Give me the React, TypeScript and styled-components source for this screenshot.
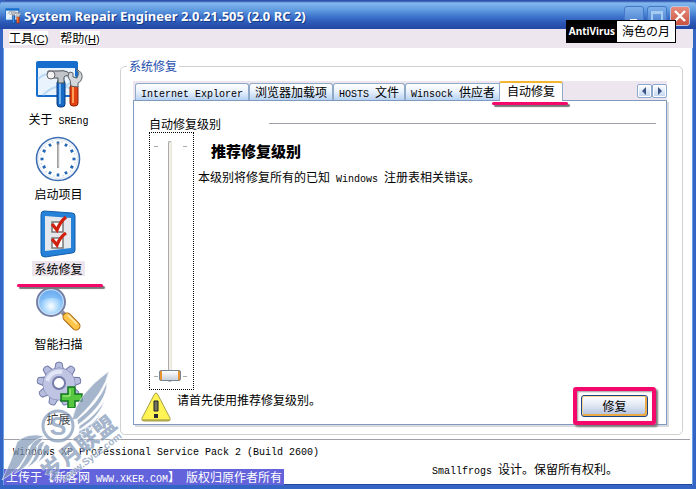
import React from "react";
import styled, { createGlobalStyle, css } from "styled-components";

const GlobalStyle = createGlobalStyle`
  * { box-sizing: border-box; }
  body {
    margin: 0;
    background: #fff;
    color: #000;
    font: 12px/16px "Noto Sans CJK SC", sans-serif;
  }
  button, input { font: inherit; color: inherit; margin: 0; }
`;

const Window = styled.div`
  position: relative;
  display: flex;
  flex-direction: column;
  min-height: 100vh;
  border: solid #3465c4;
  border-width: 0 3px 4px;
  background: #fff;
  box-shadow: inset 1px 0 #6d9ee8, inset -1px 0 #6d9ee8, inset 0 -1px #2348a0;
`;

const TitleBar = styled.header`
  display: flex;
  align-items: center;
  gap: 3px;
  height: 29px;
  margin: 0 -3px;
  padding: 3px 6px 0 5px;
  border-radius: 5px 5px 0 0;
  background: linear-gradient(#2d51ac 0, #2d51ac 1px, #84b8ee 3px, #5f9be0 10px, #3c72cb 17px, #2a56b4 23px, #2347a5 29px);
`;

const Title = styled.h1`
  flex: 1;
  margin: 0;
  color: #fff;
  font: 700 13px/20px "Noto Sans", sans-serif;
  text-shadow: 1px 1px #173a86;
  white-space: nowrap;
`;

const Controls = styled.div`
  display: flex;
  gap: 3px;
`;

const ControlButton = styled.button<{ $close?: boolean }>`
  display: grid;
  place-items: center;
  width: 20px;
  height: 20px;
  padding: 0;
  border: 1px solid ${(p) => (p.$close ? "#b9c7e8" : "#4477c8")};
  border-radius: 3px;
  background: ${(p) => (p.$close ? "linear-gradient(#e98d7c, #c9523f)" : "linear-gradient(#7fb2ea, #4478cc)")};
`;

const MenuBar = styled.nav`
  display: flex;
  gap: 12px;
  height: 19px;
  padding: 2px 6px;
  background: #ede6ee;
`;

const MenuItem = styled.button`
  height: 14px;
  padding: 0;
  border: 0;
  background: #fff;
  line-height: 13px;
`;

const Latin = styled.span`
  font-family: "Liberation Sans", sans-serif;
  font-size: 11px;
`;

const Mono = styled.span`
  font-family: "Liberation Mono", monospace;
  font-size: 10px;
  white-space: pre;
`;

const Main = styled.main`
  flex: 1;
  display: grid;
  grid-template-columns: 111px 1fr;
  gap: 6px;
  padding: 10px 10px 4px 0;
`;

const Sidebar = styled.nav`
  display: flex;
  flex-direction: column;
  align-items: center;
`;

const SideItem = styled.button`
  display: flex;
  flex-direction: column;
  align-items: center;
  gap: 3px;
  height: 75px;
  padding: 2px 0 0;
  border: 0;
  background: none;
`;

const SideLabel = styled.span<{ $active?: boolean }>`
  position: relative;
  height: 15px;
  padding: 0 2px;
  line-height: 15px;
  background: ${(p) => (p.$active ? "#ede6ee" : "none")};
`;

const markLine = css`
  content: "";
  position: absolute;
  height: 3px;
  border-radius: 2px;
  background: #f4086c;
  box-shadow: 2px 2px 1px #777;
`;

const SideMark = styled.i`
  &::after {
    ${markLine}
    left: -15px;
    right: -18px;
    top: 23px;
  }
`;

const Group = styled.fieldset`
  display: flex;
  flex-direction: column;
  min-width: 0;
  margin: 0;
  padding: 7px 15px 9px 12px;
  border: 1px solid #d0d0d0;
  border-radius: 5px;
`;

const Legend = styled.legend`
  margin-left: -6px;
  padding: 0 2px;
  color: #1f4fae;
`;

const TabStrip = styled.div`
  display: flex;
  align-items: flex-end;
  height: 19px;
  padding-left: 2px;
  background: #ede6ee;
`;

const Tab = styled.button<{ $active?: boolean }>`
  position: relative;
  height: 17px;
  padding: 0 5px;
  border: 1px solid #8fa9c8;
  border-bottom: 0;
  border-radius: 3px 3px 0 0;
  background: linear-gradient(#fff, #eaf2fd 45%, #b7d2f2);
  line-height: 16px;
  white-space: nowrap;
  ${(p) =>
    p.$active &&
    css`
      z-index: 1;
      height: 20px;
      margin: 0 0 -1px -2px;
      padding: 0 7px 2px;
      border-top: 2px solid #f5b52e;
      background: #fff;
      &::after {
        ${markLine}
        left: -8px;
        right: -6px;
        bottom: -4px;
      }
    `}
`;

const Scrollers = styled.div`
  display: flex;
  align-self: center;
  margin-left: auto;
`;

const ScrollButton = styled.button`
  display: grid;
  place-items: center;
  width: 15px;
  height: 14px;
  padding: 0;
  border: 1px solid #8ba6cf;
  border-radius: 2px;
  background: linear-gradient(#fff, #bfd3ef);
  box-shadow: inset 0 0 0 1px #fff;
`;

const Panel = styled.section`
  flex: 1;
  display: flex;
  flex-direction: column;
  padding: 14px 10px 0 15px;
  border: 1px solid #7f9ac0;
  box-shadow: 2px 2px #d9d9de;
`;

const PanelHeading = styled.div`
  display: grid;
  grid-template-columns: 120px 1fr;
  align-items: center;
  height: 17px;
  &::after {
    content: "";
    height: 1px;
    background: #a0a0a8;
  }
`;

const PanelBody = styled.div`
  flex: 1;
  display: grid;
  grid-template-columns: 45px 1fr;
  gap: 4px;
`;

const SliderBox = styled.label`
  position: relative;
  display: flex;
  justify-content: center;
  padding: 8px 4px 7px 0;
  border: 1px dotted #000;
`;

const tick = css`
  content: "";
  position: absolute;
  left: 4px;
  right: 6px;
  height: 1px;
  background: linear-gradient(90deg, #aaa 4px, transparent 4px calc(100% - 4px), #aaa calc(100% - 4px));
`;

const Ticks = styled.i`
  &::before { ${tick} top: 13px; }
  &::after { ${tick} bottom: 12px; }
`;

const Range = styled.input`
  appearance: none;
  position: relative;
  width: 22px;
  background: none;
  writing-mode: vertical-lr;
  direction: rtl;
  &::-webkit-slider-runnable-track {
    width: 4px;
    border: 1px solid #aaa;
    border-right-color: #e8e6dc;
    border-radius: 2px;
    background: #f2f0e6;
  }
  &::-webkit-slider-thumb {
    appearance: none;
    width: 22px;
    height: 11px;
    margin-left: -10px;
    border: 1px solid #778494;
    border-radius: 2px;
    background:
      linear-gradient(90deg, #e8922e 2px, transparent 2px calc(100% - 2px), #e8922e calc(100% - 2px)),
      linear-gradient(#fff, #c9d0dc);
  }
`;

const Advice = styled.div`
  padding: 10px 0 0;
`;

const Level = styled.h2`
  margin: 0 0 9px 13px;
  font-size: 15px;
  font-weight: 900;
  line-height: 18px;
`;

const Text = styled.p`
  margin: 0;
`;

const ActionRow = styled.div`
  display: flex;
  align-items: flex-start;
  gap: 6px;
  height: 34px;
  margin-left: -8px;
  padding: 2px 8px 0 0;
`;

const Hint = styled.p`
  flex: 1;
  margin: 0;
`;

const RepairButton = styled.button`
  position: relative;
  width: 67px;
  height: 22px;
  margin-top: 3px;
  padding: 0;
  border: 1px solid #1c4683;
  border-radius: 3px;
  background: linear-gradient(#fff, #dfe5f2 50%, #aebfdd);
  box-shadow: inset 1px 1px #fbd592, inset -2px -2px #ecaa45;
  line-height: 18px;
`;

const Highlight = styled.i`
  position: absolute;
  inset: -9px;
  border: 4px solid #f4086c;
  border-radius: 3px;
  box-shadow: 2px 2px 2px #777, inset 1px 1px 2px #999;
`;

const Footer = styled.footer`
  display: grid;
  grid-template-columns: auto 1fr;
  grid-template-rows: 24px 16px;
  row-gap: 5px;
  height: 46px;
  margin-right: 3px;
  border-top: 1px solid #a0a0a8;
`;

const System = styled.p`
  grid-column: 1 / -1;
  margin: 0;
  padding: 2px 10px;
`;

const Source = styled.p`
  margin: 0 0 0 1px;
  padding: 0 2px;
  background: #6363dc;
  color: #fff;
  white-space: nowrap;
`;

const Credit = styled.p`
  margin: -8px 72px 0 auto;
`;

const Badge = styled.div`
  position: absolute;
  top: 20px;
  right: 17px;
  display: flex;
  height: 23px;
  border: 1px solid #000;
  background: #fff;
  line-height: 20px;
  b {
    width: 50px;
    background: #000;
    color: #fff;
    font: 700 10px/21px "Noto Sans", sans-serif;
    text-align: center;
  }
  span { padding: 0 5px; }
`;

const Watermark = styled.svg`
  position: absolute;
  left: -3px;
  bottom: -4px;
  pointer-events: none;
`;

const ToolsIcon = ({ size = 48 }: { size?: number }) => (
  <svg width={size} height={size} viewBox="0 0 48 48">
    <rect x="1" y="1" width="42" height="36" rx="2" fill="#176dcc" />
    <path d="M3 8h37v27H3z" fill="#e9f3fd" />
    <path d="M3 19Q16 8 24 20T40 16M8 35Q23 20 40 31" fill="none" stroke="#b9d9f6" strokeWidth="2" />
    <rect x="22" y="20" width="8" height="27" rx="3" fill="#1769c4" stroke="#083b82" />
    <path d="M25 23v21" stroke="#6eb2f0" strokeWidth="2" />
    <rect x="35" y="24" width="8" height="22" rx="3" fill="#e34212" stroke="#8e230a" />
    <path d="M38 27v16" stroke="#ffa259" strokeWidth="2" />
    <path d="M13 11h10q11-2 14 7q-6-4-8-1v6h-6v-5h-9q-3-3-1-7z" fill="#c1c5c9" stroke="#4b5054" />
    <circle cx="16" cy="15" r="4" fill="#f4f4f4" stroke="#666" />
    <path d="M36 26l-1-6q-4-4 0-8l3 1v4l4 1 2-5-3-4q7 3 6 9-1 4-4 5v4z" fill="#d5d8da" stroke="#5d6266" />
  </svg>
);

const ClockIcon = () => (
  <svg width="48" height="48" viewBox="0 0 48 48">
    <circle cx="24" cy="24" r="21.5" fill="#fff" stroke="#3c6fb3" strokeWidth="1.6" />
    <circle cx="24" cy="24" r="19.5" fill="none" stroke="#dce6ef" />
    {Array.from({ length: 12 }, (_, i) => (
      <g key={i} transform={`rotate(${i * 30} 24 24)`}>
        <path d="M24 6.5v3" stroke="#2467b5" strokeWidth="2.6" />
        <path d="M28 6.5v1" stroke="#9bb6cf" />
      </g>
    ))}
    <path d="M24 8v25" stroke="#888" strokeWidth="1.6" />
    <path d="M25 10v22" stroke="#ddd" />
  </svg>
);

const ChecklistIcon = () => (
  <svg width="48" height="48" viewBox="0 0 48 48">
    <path d="M10 1l28 2q3 0 3 3v34q0 3-3 3l-27 4q-4 0-4-4V5q0-4 3-4z" fill="#2681d8" stroke="#135da8" />
    <path d="M11 6l26 2v30l-26 3z" fill="#e4e8ec" />
    <path d="M18 12h11v10H18zM18 28h11v10H18z" fill="#fff" stroke="#777" strokeWidth="1.5" />
    <path d="M18 14l5 6q3-8 9-13M18 29l5 6q3-8 9-12" fill="none" stroke="#d0200e" strokeWidth="3.3" />
  </svg>
);

const SearchIcon = () => (
  <svg width="48" height="48" viewBox="0 0 48 48">
    <defs>
      <radialGradient id="lens" cy="65%"><stop stopColor="#fff" /><stop offset=".55" stopColor="#a9d7fc" /><stop offset="1" stopColor="#70b0f1" /></radialGradient>
    </defs>
    <path d="M28 27l5 5" stroke="#8a8c9f" strokeWidth="4" />
    <path d="M33 32L42 41" stroke="#a76513" strokeWidth="9" strokeLinecap="round" />
    <path d="M33 32L42 41" stroke="#ffc448" strokeWidth="7" strokeLinecap="round" />
    <path d="M34 30l9 9" stroke="#ffe7a0" strokeWidth="2" />
    <circle cx="17" cy="17" r="14" fill="url(#lens)" stroke="#7580a4" strokeWidth="2" />
    <path d="M7 16Q9 7 18 7t9 8q-9-5-20 1z" fill="#6caef3" opacity=".5" />
    <circle cx="17" cy="17" r="12.5" fill="none" stroke="#d5e3f6" />
  </svg>
);

const GearIcon = () => (
  <svg width="48" height="48" viewBox="0 0 48 48">
    <g fill="#b6bddf" stroke="#737ba8">
      {Array.from({ length: 9 }, (_, i) => (
        <path key={i} d="M19.5 10l1.5-7q3-2 6 0l1.5 7z" transform={`rotate(${i * 40} 24 24)`} />
      ))}
      <circle cx="24" cy="24" r="16" />
    </g>
    <circle cx="24" cy="24" r="15.8" fill="#bec4e2" />
    <path d="M12 21Q16 10 27 12" fill="none" stroke="#e2e5f5" strokeWidth="4" />
    <circle cx="24" cy="23" r="6" fill="#fff" stroke="#737ba8" strokeWidth="2" />
    <path d="M33 27h7v7h7v7h-7v7h-7v-7h-7v-7h7z" fill="#55c83f" stroke="#137522" strokeWidth="1.5" />
    <path d="M35 29v7h-7" stroke="#b3f291" fill="none" />
  </svg>
);

const WarningIcon = () => (
  <svg width="30" height="30" viewBox="0 0 30 30">
    <path d="M15 1q1 0 2 2l12 23q1 3-2 3H3q-3 0-2-3L13 3q1-2 2-2z" fill="#fff453" stroke="#a6a04b" />
    <path d="M2 28h26" stroke="#8e8845" />
    <path d="M13 9h4v10h-4z" fill="#73745f" stroke="#1d2028" />
    <path d="M13 22h4v4h-4z" fill="#252a35" />
  </svg>
);

const Arrow = ({ d }: { d: string }) => (
  <svg width="7" height="8" viewBox="0 0 7 8"><path d={d} fill="#3c5484" /></svg>
);

const feathers = [
  "M72 50Q76 25 109 1Q105 22 77 49z",
  "M77 50Q98 34 107 12Q108 32 78 55z",
  "M79 56Q98 44 104 30Q102 45 79 60z",
  "M79 61Q94 54 100 44Q97 57 78 65z",
  "M78 66Q88 62 94 56Q90 67 76 70z",
  "M44 66Q27 62 17 72Q12 90 2 110Q24 98 29 76z",
  "M44 68Q34 68 30 77Q25 92 14 104Q32 96 36 77z",
  "M45 71Q38 72 37 79Q34 91 26 98Q40 92 42 78z",
  "M47 74Q43 75 43 80Q42 88 36 93Q47 88 50 77z",
];

const sideItems = [
  { label: <>关于<Mono> SREng</Mono></>, icon: <ToolsIcon /> },
  { label: "启动项目", icon: <ClockIcon /> },
  { label: "系统修复", icon: <ChecklistIcon />, active: true },
  { label: "智能扫描", icon: <SearchIcon /> },
  { label: "扩展", icon: <GearIcon /> },
];

export default function App() {
  return (
    <>
      <GlobalStyle />
      <Window>
        <TitleBar>
          <ToolsIcon size={16} />
          <Title>System Repair Engineer 2.0.21.505 (2.0 RC 2)</Title>
          <Controls>
            <ControlButton aria-label="Minimize">
              <svg width="14" height="14"><path d="M3 10h7v3H3z" fill="#fff" /></svg>
            </ControlButton>
            <ControlButton aria-label="Maximize">
              <svg width="14" height="14"><path d="M2 3h10v9H2zM2 4h10" fill="none" stroke="#a5cbf3" strokeWidth="2" /></svg>
            </ControlButton>
            <ControlButton aria-label="Close" $close>
              <svg width="14" height="14"><path d="M2 2l10 10M12 2L2 12" stroke="#fff" strokeWidth="2.4" /></svg>
            </ControlButton>
          </Controls>
        </TitleBar>
        <MenuBar>
          <MenuItem>工具<Latin>(<u>C</u>)</Latin></MenuItem>
          <MenuItem>帮助<Latin>(<u>H</u>)</Latin></MenuItem>
        </MenuBar>
        <Main>
          <Sidebar>
            {sideItems.map((item, i) => (
              <SideItem key={i}>
                {item.icon}
                <SideLabel $active={item.active}>
                  {item.label}
                  {item.active && <SideMark />}
                </SideLabel>
              </SideItem>
            ))}
          </Sidebar>
          <Group>
            <Legend>系统修复</Legend>
            <TabStrip role="tablist">
              <Tab role="tab"><Mono>Internet Explorer</Mono></Tab>
              <Tab role="tab">浏览器加载项</Tab>
              <Tab role="tab"><Mono>HOSTS </Mono>文件</Tab>
              <Tab role="tab"><Mono>Winsock </Mono>供应者</Tab>
              <Tab role="tab" aria-selected $active>自动修复</Tab>
              <Scrollers>
                <ScrollButton aria-label="Previous tabs"><Arrow d="M5 0v8L1 4z" /></ScrollButton>
                <ScrollButton aria-label="Next tabs"><Arrow d="M2 0v8l4-4z" /></ScrollButton>
              </Scrollers>
            </TabStrip>
            <Panel>
              <PanelHeading id="level-label">自动修复级别</PanelHeading>
              <PanelBody>
                <SliderBox>
                  <Ticks />
                  <Range type="range" min={0} max={1} defaultValue={0} aria-labelledby="level-label" />
                </SliderBox>
                <Advice>
                  <Level>推荐修复级别</Level>
                  <Text>本级别将修复所有的已知<Mono> Windows </Mono>注册表相关错误。</Text>
                </Advice>
              </PanelBody>
              <ActionRow>
                <WarningIcon />
                <Hint>请首先使用推荐修复级别。</Hint>
                <RepairButton>修复<Highlight /></RepairButton>
              </ActionRow>
            </Panel>
          </Group>
        </Main>
        <Footer>
          <System><Mono>Windows XP Professional Service Pack 2 (Build 2600)</Mono></System>
          <Source>上传于【新客网<Mono> WWW.XKER.COM</Mono>】<Mono> </Mono>版权归原作者所有</Source>
          <Credit><Mono>Smallfrogs </Mono>设计。保留所有权利。</Credit>
        </Footer>
        <Badge><b>AntiVirus</b><span>海色の月</span></Badge>
        <Watermark width="124" height="119" viewBox="0 0 124 119" opacity=".72">
          <g fill="#8399b8" stroke="#fff" strokeWidth=".8">
            {feathers.map((d) => <path key={d} d={d} />)}
          </g>
          <circle cx="58" cy="56" r="15" fill="#fff" fillOpacity=".3" stroke="#8399b8" strokeWidth="3" />
          <text x="58" y="65" textAnchor="middle" fill="#8399b8" fontFamily="Liberation Sans, sans-serif" fontSize="25" fontWeight="700">S</text>
          <g transform="rotate(-38 54 108)" fill="#8399b8" stroke="#fff" strokeWidth="1" paintOrder="stroke">
            <text x="48" y="107" fontFamily="Noto Sans CJK SC, sans-serif" fontSize="22" fontWeight="900">岁月联盟</text>
            <text x="60" y="118" fontFamily="Liberation Sans, sans-serif" fontSize="10" fontWeight="700">www.Syue.com</text>
          </g>
        </Watermark>
      </Window>
    </>
  );
}
